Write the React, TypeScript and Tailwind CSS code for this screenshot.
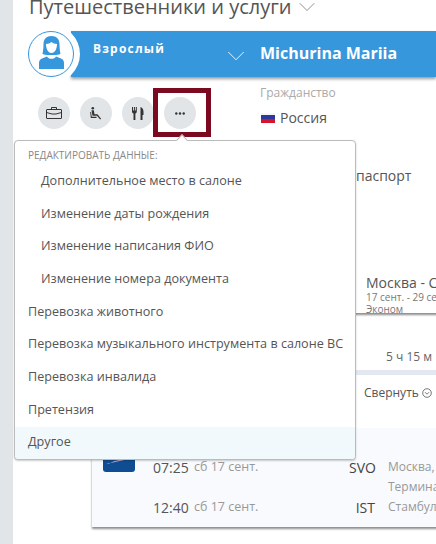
import { ChevronDown } from 'lucide-react'

const FONT = { fontFamily: '"Open Sans", "Noto Sans", sans-serif' }

const SUB_ITEMS = [
  'Дополнительное место в салоне',
  'Изменение даты рождения',
  'Изменение написания ФИО',
  'Изменение номера документа',
]

const MAIN_ITEMS = [
  'Перевозка животного',
  'Перевозка музыкального инструмента в салоне ВС',
  'Перевозка инвалида',
  'Претензия',
]

function Avatar() {
  return (
    <div className="relative z-10 flex h-[46px] w-[46px] flex-none items-center justify-center overflow-hidden rounded-full border border-[#3797dc] bg-white shadow-[0_0_0_6px_#fff]">
      <svg width="25" height="33" viewBox="0 0 25 33" fill="#3797dc" className="-mt-[3px]">
        <path d="M12.500 0C7.500 0 4.500 3 4.500 8c0 4-.5 7.500-1 10 2 .8 4 1 5.500 1h7c1.500 0 3.500-.2 5.500-1-.5-2.500-1-6-1-10 0-5-3-8-8-8z" />
        <path fill="#fff" d="M12.500 6c-1.200 1.300-3.500 2-5.500 2 0 4.500 1.800 9 5.500 9s5.500-4.500 5.500-9c-2 0-4.300-.7-5.500-2z" />
        <path d="M8 20.500 3 22.500c-2 .9-3 2.200-3 4.500v6h25v-6c0-2.300-1-3.600-3-4.500l-5-2c-.8 1.500-2.500 2.300-4.500 2.300S8.800 22 8 20.500z" />
      </svg>
    </div>
  )
}

function CaseIcon() {
  return (
    <svg width="16" height="12" viewBox="0 0 16 12" fill="none" stroke="#333" strokeWidth="1">
      <rect x="0.500" y="2.500" width="15" height="9" rx="0.500" />
      <path d="M5.500 2.500V.5h5v2M.5 5.500 6 7h4l5.500-1.500" />
    </svg>
  )
}

function SeatIcon() {
  return (
    <svg width="13" height="13" viewBox="0 0 13 13" fill="#333">
      <circle cx="2.800" cy="1.300" r="1.300" />
      <path d="M1.500 3.200h2.300l.7 4h3l3.600 4.500-.9.800-3.300-3.700H2.500z" />
      <path d="M.2 5h.9l.6 4.800h4.800V11H.8z" />
    </svg>
  )
}

function ForkKnifeIcon() {
  return (
    <svg width="12" height="13" viewBox="0 0 12 13" fill="#333">
      <path d="M0 0h1v3.500h.9V0h1v3.500h.9V0h1v4.500c0 1-.6 1.700-1.400 2V13H1.500V6.500C.6 6.200 0 5.500 0 4.500z" />
      <path d="M8.500 0C10.500.5 11.500 2.500 11.500 5v3H10.500v5H8.500z" />
    </svg>
  )
}

function DotsIcon() {
  return (
    <svg width="10" height="3" viewBox="0 0 10 3" fill="#333">
      <circle cx="1.300" cy="1.500" r="1.200" />
      <circle cx="5" cy="1.500" r="1.200" />
      <circle cx="8.700" cy="1.500" r="1.200" />
    </svg>
  )
}

function RoundButton({ children }: { children: React.ReactNode }) {
  return <div className="flex h-8 w-8 items-center justify-center rounded-full bg-[#e2e5e7]">{children}</div>
}

function FlightRow({ time, code, city }: { time: string; code: string; city: string }) {
  return (
    <div className="flex h-5 items-center">
      <span className="w-[41px] flex-none text-[14px] text-[#555]">{time}</span>
      <span className="w-[155px] flex-none text-[12.500px] text-[#999]">сб 17 сент.</span>
      <span className="w-[26px] flex-none text-right text-[14px] text-[#444]">{code}</span>
      <span className="ml-[13px] flex-none text-[12px] whitespace-nowrap text-[#999]">{city}</span>
    </div>
  )
}

export default function App() {
  return (
    <div className="relative flex h-[544px] w-[436px] overflow-hidden bg-white" style={FONT}>
      <div className="w-[13px] flex-none bg-[#e1e5e7]" />

      <div className="min-w-0 flex-1">
        <div className="-mt-[8px] ml-[16px] flex h-[39px] items-start gap-[1px]">
          <span className="text-[20px] leading-[30px] whitespace-nowrap text-[#555]">Путешественники и услуги</span>
          <ChevronDown size={28} strokeWidth={0.7} className="mt-[1px] text-[#777]" />
        </div>

        <div className="ml-[15px] flex h-[46px]">
          <Avatar />
          <div className="-ml-[3px] flex h-[46px] flex-1 bg-[#3797dc] shadow-[0_2px_3px_rgba(0,0,0,0.4)]">
            <span className="mt-[9px] ml-[22px] w-[128px] text-[12px] font-bold tracking-[1.200px] text-white">Взрослый</span>
            <ChevronDown size={30} strokeWidth={0.7} className="mt-[10px] text-white" />
            <span className="mt-[10px] ml-[9px] text-[16px] leading-[24px] font-bold whitespace-nowrap text-white">Michurina Mariia</span>
          </div>
        </div>

        <div className="mt-[20px] ml-[25px] flex h-[32px] gap-[10px]">
          <RoundButton>
            <CaseIcon />
          </RoundButton>
          <RoundButton>
            <SeatIcon />
          </RoundButton>
          <RoundButton>
            <ForkKnifeIcon />
          </RoundButton>
          <RoundButton>
            <DotsIcon />
          </RoundButton>
          <div className="-mt-[13px] ml-[54px] flex-none">
            <div className="text-[12px] leading-[18px] text-[#aaa]">Гражданство</div>
            <div className="mt-[6px] flex items-center gap-[5px]">
              <div className="ml-[1px] flex h-[10px] w-[14px] flex-col">
                <div className="h-[2px] bg-[#f5f5f5]" />
                <div className="h-[4px] bg-[#2a3a9c]" />
                <div className="h-[4px] bg-[#d6142b]" />
              </div>
              <span className="text-[14px] leading-[20px] text-[#555]">Россия</span>
            </div>
          </div>
        </div>

        <div className="mt-[37px] ml-[343px] text-[14px] leading-[20px] text-[#555]">паспорт</div>

        <div className="mt-[81px] ml-[79px] flex h-[46px] w-[400px] bg-white shadow-[0_2px_2px_rgba(0,0,0,0.45)]">
          <div className="w-[274px] flex-none" />
          <div className="pt-[8px] whitespace-nowrap">
            <div className="text-[14px] leading-[16px] text-[#555]">Москва - Стамбул</div>
            <div className="text-[10px] leading-[12px] text-[#777]">17 сент. - 29 сент.</div>
            <div className="text-[10px] leading-[12px] text-[#777]">Эконом</div>
          </div>
        </div>

        <div className="mt-[35px] ml-[373px] text-[12px] leading-[18px] whitespace-nowrap text-[#666]">5 ч 15 м</div>
        <div className="mt-[4px] ml-[342px] h-[5px] bg-[#e3e8f0]" />

        <div className="mt-[9px] ml-[351px] flex items-center gap-[3px] text-[12px] leading-[18px] whitespace-nowrap text-[#555]">
          Свернуть
          <svg width="10" height="10" viewBox="0 0 10 10" fill="none" stroke="#555" strokeWidth="0.8">
            <circle cx="5" cy="5" r="4.300" />
            <path d="M3 4.200 5 6.200 7 4.200" />
          </svg>
        </div>

        <div className="mt-[26px] ml-[79px] flex h-[99px] w-[400px] gap-[18px] bg-[#f8fafd] pt-[14px] pl-[11px] shadow-[0_2px_2px_rgba(0,0,0,0.45)]">
          <svg width="32" height="30" viewBox="0 0 32 30" className="flex-none">
            <rect width="32" height="30" rx="3" fill="#0f4c92" />
            <path d="M3 22 26 17c-8 0-17 2-20 5z" fill="#c5a9c0" />
          </svg>
          <div className="min-w-0 flex-1 pt-[15px]">
            <FlightRow time="07:25" code="SVO" city="Москва, Шереметьево" />
            <div className="flex h-5 items-center pl-[235px] text-[12px] whitespace-nowrap text-[#999]">Терминал D</div>
            <FlightRow time="12:40" code="IST" city="Стамбул" />
          </div>
        </div>
      </div>

      <div className="pointer-events-none absolute top-[88px] left-[153px] h-[49px] w-[58px] border-[5px] border-[#7b0a20]" />

      <div className="absolute top-[140px] left-[14px] h-[320px] w-[342px] rounded-[4px] border border-[#bbb] bg-white shadow-[0_1px_2px_rgba(0,0,0,0.2)]">
        <div className="absolute -top-[5px] left-[163px] h-2 w-2 rotate-45 border-t border-l border-[#bbb] bg-white" />
        <div className="pt-[6px] pl-[13px] text-[10px] leading-[16px] text-[#888] uppercase">Редактировать данные:</div>
        <div className="mt-[2px]">
          {SUB_ITEMS.map((item) => (
            <div key={item} className="flex h-[32.700px] items-center pl-[26px] text-[12.600px] whitespace-nowrap text-[#555]">
              {item}
            </div>
          ))}
          {MAIN_ITEMS.map((item) => (
            <div key={item} className="flex h-[32.700px] items-center pl-[13px] text-[12.600px] whitespace-nowrap text-[#555]">
              {item}
            </div>
          ))}
          <div className="flex h-[32.700px] items-center rounded-b-[4px] bg-[#f2f9fd] pl-[13px] text-[12.600px] text-[#555]">Другое</div>
        </div>
      </div>
    </div>
  )
}
